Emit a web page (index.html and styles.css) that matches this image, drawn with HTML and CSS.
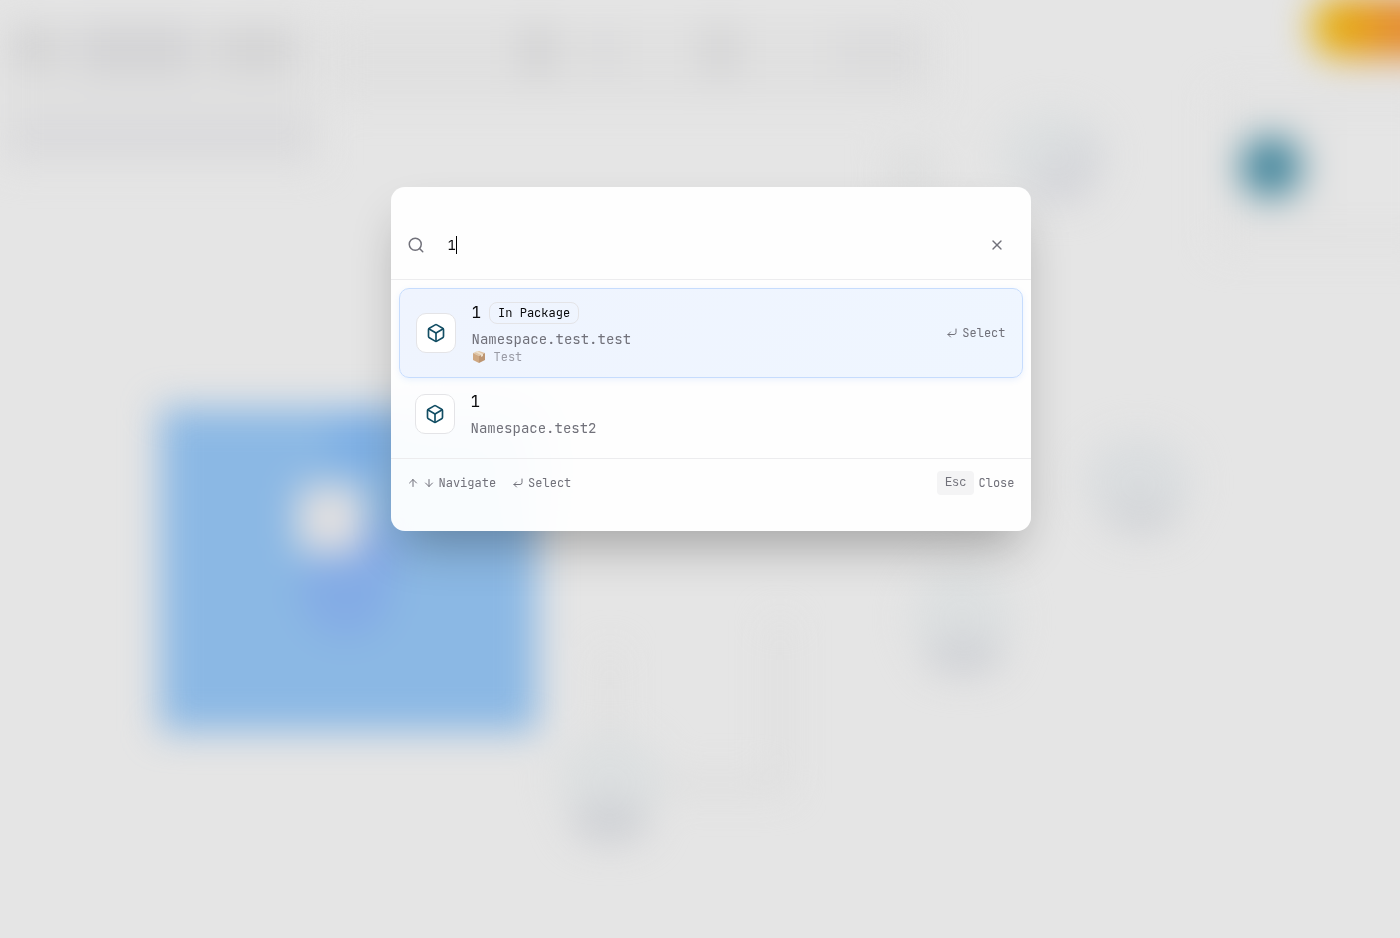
FILE: index.html
```html
<!DOCTYPE html>
<html lang="en">
<head>
    <meta charset="UTF-8">
    <meta name="viewport" content="width=device-width, initial-scale=1.0">
    <title>Search</title>
    <link rel="stylesheet" href="styles.css">
</head>
<body>

    <!-- Diagram behind the dialog -->
    <svg class="canvas" aria-hidden="true">
        <defs>
            <linearGradient id="pill" gradientUnits="userSpaceOnUse" x1="1310" y1="0" x2="1400" y2="0">
                <stop offset="0" stop-color="#e5b800"/>
                <stop offset="0.5" stop-color="#e6a010"/>
                <stop offset="1" stop-color="#e5882c"/>
            </linearGradient>
            <filter id="blur" filterUnits="userSpaceOnUse" x="-100" y="-100" width="1700" height="1200" color-interpolation-filters="sRGB">
                <feGaussianBlur stdDeviation="18"/>
            </filter>
        </defs>
        <g filter="url(#blur)">
            <!-- Toolbar and headings -->
            <rect x="0" y="20" width="320" height="145" fill="#e0e0e0"/>
            <rect x="330" y="22" width="605" height="80" fill="#e0e0e0"/>
            <rect x="14" y="28" width="44" height="40" fill="#d1d1d2"/>
            <rect x="80" y="24" width="115" height="50" fill="#d3d3d5"/>
            <rect x="216" y="28" width="78" height="42" fill="#d3d3d4"/>
            <rect x="10" y="118" width="300" height="40" fill="#dadadc"/>
            <rect x="521" y="24" width="34" height="52" fill="#d2d2d3"/>
            <rect x="592" y="32" width="24" height="38" fill="#d8d8d9"/>
            <rect x="704" y="24" width="32" height="52" fill="#d3d3d4"/>
            <rect x="836" y="28" width="80" height="46" fill="#dbdbdc"/>
            <!-- Side panel -->
            <rect x="1215" y="90" width="220" height="160" fill="#e2e2e2"/>
            <rect x="1330" y="115" width="100" height="105" fill="#e5e5e5"/>
            <circle cx="1271" cy="167" r="31" fill="#43869c"/>
            <rect x="1312" y="-2" width="160" height="59" rx="26" fill="url(#pill)"/>
            <!-- Connectors -->
            <path d="M610 760V650M650 785H780V620" fill="none" stroke="#dddddd" stroke-width="16"/>
            <!-- Nodes -->
            <ellipse cx="1052" cy="155" rx="54" ry="44" fill="#dcdfe0"/>
            <ellipse cx="1082" cy="158" rx="24" ry="26" fill="#d7d9dc"/>
            <ellipse cx="1060" cy="184" rx="34" ry="20" fill="#d4d5d9"/>
            <rect x="888" y="150" width="48" height="45" fill="#dddede"/>
            <ellipse cx="1138" cy="482" rx="54" ry="46" fill="#dadddf"/>
            <ellipse cx="1142" cy="516" rx="38" ry="20" fill="#d3d5d8"/>
            <ellipse cx="962" cy="618" rx="52" ry="52" fill="#dcdfe0"/>
            <ellipse cx="964" cy="656" rx="40" ry="20" fill="#d0d2d6"/>
            <ellipse cx="610" cy="780" rx="54" ry="46" fill="#dcdfe0"/>
            <ellipse cx="610" cy="822" rx="40" ry="22" fill="#cfd1d5"/>
            <!-- Selected area -->
            <rect x="160" y="408" width="377" height="323" fill="#8bb8e4"/>
            <circle cx="362" cy="440" r="32" fill="#7caee4"/>
            <circle cx="346" cy="592" r="46" fill="#84ace5"/>
            <circle cx="374" cy="550" r="26" fill="#84a9e5"/>
            <rect x="297" y="485" width="66" height="68" rx="12" fill="#e2e0e1"/>
        </g>
    </svg>

    <div class="overlay">
        <div class="dialog" role="dialog" aria-label="Search">
            <div class="search">
                <label for="query" aria-label="Search">
                    <svg class="icon icon-search" viewBox="0 0 24 24"><circle cx="11" cy="11" r="8"/><path d="m21 21-4.3-4.3"/></svg>
                </label>
                <div class="field">
                    <input type="text" id="query" value="1" autocomplete="off">
                    <span class="caret"></span>
                </div>
                <button class="clear-btn" type="button" aria-label="Clear">
                    <svg class="icon icon-clear" viewBox="0 0 24 24"><path d="M18 6 6 18"/><path d="m6 6 12 12"/></svg>
                </button>
            </div>

            <ul class="results">
                <!-- Result 1 -->
                <li>
                    <button class="result selected" type="button">
                        <span class="tile">
                            <svg class="icon icon-box" viewBox="0 0 24 24"><path d="M21 8a2 2 0 0 0-1-1.73l-7-4a2 2 0 0 0-2 0l-7 4A2 2 0 0 0 3 8v8a2 2 0 0 0 1 1.73l7 4a2 2 0 0 0 2 0l7-4A2 2 0 0 0 21 16Z"/><path d="m3.3 7 8.7 5 8.7-5"/><path d="M12 22V12"/></svg>
                        </span>
                        <span class="info">
                            <span class="title">1 <span class="badge">In Package</span></span>
                            <span class="namespace">Namespace.test.test</span>
                            <span class="package">
                                <svg class="parcel" viewBox="0 0 14 14"><path fill="#e0c5a5" d="m7 1 6 2-6 3-6-3z"/><path fill="#cfa882" d="m1 3 6 3v7l-6-3z"/><path fill="#bd9571" d="m13 3-6 3v7l6-3z"/><path fill="#eee0cc" d="m3 2 6 3v2l2-1V4L5 1z"/></svg>
                                Test
                            </span>
                        </span>
                        <span class="hint">
                            <svg class="icon icon-key" viewBox="0 0 24 24"><path d="M20 4v7a4 4 0 0 1-4 4H4"/><path d="m9 10-5 5 5 5"/></svg>
                            Select
                        </span>
                    </button>
                </li>
                <!-- Result 2 -->
                <li>
                    <button class="result" type="button">
                        <span class="tile">
                            <svg class="icon icon-box" viewBox="0 0 24 24"><path d="M21 8a2 2 0 0 0-1-1.73l-7-4a2 2 0 0 0-2 0l-7 4A2 2 0 0 0 3 8v8a2 2 0 0 0 1 1.73l7 4a2 2 0 0 0 2 0l7-4A2 2 0 0 0 21 16Z"/><path d="m3.3 7 8.7 5 8.7-5"/><path d="M12 22V12"/></svg>
                        </span>
                        <span class="info">
                            <span class="title">1</span>
                            <span class="namespace">Namespace.test2</span>
                        </span>
                    </button>
                </li>
            </ul>

            <div class="footer">
                <span class="hint">
                    <svg class="icon icon-key" viewBox="0 0 24 24"><path d="m5 12 7-7 7 7"/><path d="M12 19V5"/></svg>
                    <svg class="icon icon-key" viewBox="0 0 24 24"><path d="M12 5v14"/><path d="m19 12-7 7-7-7"/></svg>
                    Navigate
                </span>
                <span class="hint">
                    <svg class="icon icon-key" viewBox="0 0 24 24"><path d="M20 4v7a4 4 0 0 1-4 4H4"/><path d="m9 10-5 5 5 5"/></svg>
                    Select
                </span>
                <span class="hint close-hint"><kbd>Esc</kbd> Close</span>
            </div>
        </div>
    </div>

</body>
</html>
```

FILE: styles.css
```css
* {
    box-sizing: border-box;
}
body {
    font-family: "JetBrains Mono", "DejaVu Sans Mono", "Liberation Mono", monospace;
    font-size: 14px;
    line-height: 20px;
    color: #09090b;
    background: #e5e5e5;
    margin: 0;
    overflow: hidden;
}
button, input {
    font: inherit;
    color: inherit;
    background: none;
    border: none;
    padding: 0;
}
.canvas {
    position: fixed;
    inset: 0;
    width: 100%;
    height: 100%;
}
.overlay {
    position: fixed;
    inset: 0;
    display: flex;
    justify-content: center;
    align-items: flex-start;
    padding: 187px 0 0 21px;
}
.dialog {
    width: 100%;
    max-width: 640px;
    padding: 24px 0;
    border-radius: 14px;
    background: rgba(255, 255, 255, 0.95);
    backdrop-filter: blur(24px);
    box-shadow: 0 25px 50px -12px rgba(0, 0, 0, 0.3);
}
.icon {
    display: block;
    flex: none;
    fill: none;
    stroke: currentColor;
    stroke-width: 2;
    stroke-linecap: round;
    stroke-linejoin: round;
}
.icon-search {
    width: 18px;
    height: 18px;
}
.icon-clear {
    width: 16px;
    height: 16px;
}
.icon-box {
    width: 20px;
    height: 20px;
}
.icon-key {
    width: 12px;
    height: 12px;
}

/* Search row */
.search {
    display: flex;
    align-items: center;
    padding: 16px;
    color: #71717a;
    border-bottom: 1px solid #ececee;
}
.field {
    position: relative;
    flex: 1;
    margin-left: 23px;
    color: #09090b;
}
.field input {
    display: block;
    width: 100%;
    height: 36px;
    outline: none;
    caret-color: transparent;
}
.caret {
    position: absolute;
    left: 1ch;
    top: 9px;
    width: 1px;
    height: 18px;
    background: #000;
}
.clear-btn {
    display: flex;
    align-items: center;
    justify-content: center;
    width: 36px;
    height: 36px;
    cursor: pointer;
}

/* Results */
.results {
    list-style: none;
    margin: 0;
    padding: 8px;
}
.result {
    display: flex;
    align-items: center;
    gap: 16px;
    width: 100%;
    padding: 12px 16px;
    border-radius: 10px;
    text-align: left;
    cursor: pointer;
}
.result.selected {
    border: 1px solid #c6dcfd;
    background: linear-gradient(135deg, #eff4fe, #eff6ff);
    box-shadow: 0 2px 6px rgba(59, 130, 246, 0.1);
}
.tile {
    display: flex;
    align-items: center;
    justify-content: center;
    width: 40px;
    height: 40px;
    border: 1px solid #e4e4e7;
    border-radius: 10px;
    background: #fff;
    color: #134e64;
}
.info {
    flex: 1;
}
.title {
    display: flex;
    align-items: center;
    gap: 8px;
    margin-bottom: 4px;
    font-size: 16px;
    line-height: 24px;
}
.badge {
    padding: 2px 8px;
    border: 1px solid #e4e4e7;
    border-radius: 8px;
    font-size: 12px;
    line-height: 16px;
}
.namespace {
    display: block;
    color: #71717a;
}
.package {
    display: flex;
    align-items: center;
    gap: 8px;
    font-size: 12px;
    line-height: 16px;
    color: #9a9ba5;
}
.parcel {
    width: 14px;
    height: 14px;
}
.hint {
    display: flex;
    align-items: center;
    gap: 4px;
    font-size: 12px;
    line-height: 16px;
    color: #71717a;
}

/* Footer */
.footer {
    display: flex;
    align-items: center;
    gap: 16px;
    padding: 12px 16px;
    border-top: 1px solid #ececee;
}
.close-hint {
    margin-left: auto;
}
kbd {
    padding: 4px 8px;
    border-radius: 4px;
    background: #f4f4f5;
    font-family: "Liberation Mono", monospace;
    font-size: 12px;
}
```
